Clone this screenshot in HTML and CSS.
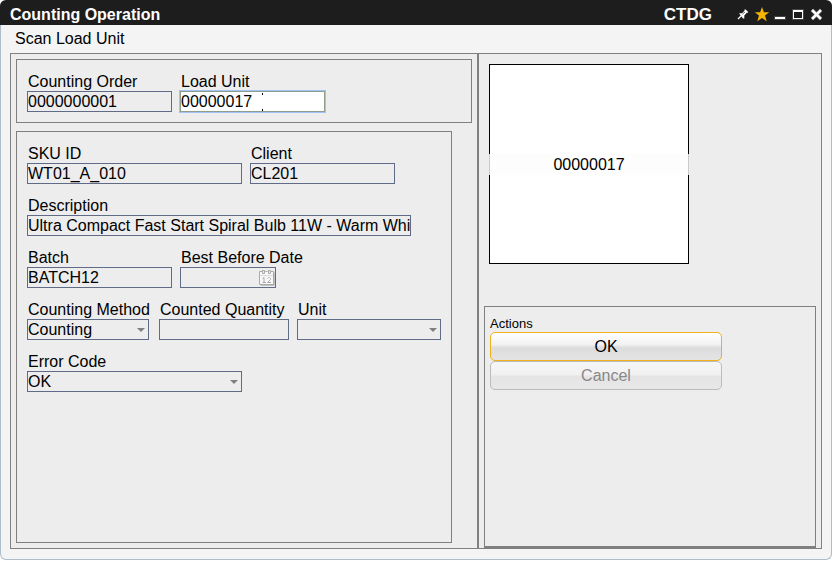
FILE: index.html
```html
<!DOCTYPE html>
<html lang="en">
<head>
<meta charset="utf-8">
<title>Counting Operation</title>
<link rel="stylesheet" href="styles.css">
</head>
<body>
<main class="window">
  <header class="titlebar">
    <h1 class="title">Counting Operation</h1>
    <span class="site">CTDG</span>
    <div class="tools">
      <button class="tool" type="button" aria-label="Pin"><svg width="16" height="16" viewBox="0 0 16 16"><path d="M4 12 7.500 8.500" stroke="#fff" stroke-width="1.300"/><path d="M5 6.200h3l2.500-2.400V2.500h1.200l2.300 2.300v1h-1.200L10.300 8.500v3H9z" fill="#fff"/><path d="M8.500 7 11 5" stroke="#666" stroke-width="1"/></svg></button>
      <button class="tool star" type="button" aria-label="Favorite"><svg width="16" height="16" viewBox="0 0 16 16"><path d="M8 0 9.900 5.300h5.300l-4.200 3.300 1.700 5.600L8 11l-4.700 3.200L5 8.600.8 5.300h5.300z" fill="#f5b400"/></svg></button>
      <button class="tool" type="button" aria-label="Minimize"><svg width="16" height="16" viewBox="0 0 16 16"><path d="M2 9h12v4H2z" fill="#444"/><path d="M3 10h10v2H3z" fill="#fff"/></svg></button>
      <button class="tool" type="button" aria-label="Maximize"><svg width="16" height="16" viewBox="0 0 16 16"><path d="M2 2h12v11H2z" fill="#444"/><path d="M3 3h10v9H3z" fill="#fff"/><path d="M4 5h8v6H4z" fill="#1d1d1d"/></svg></button>
      <button class="tool" type="button" aria-label="Close"><svg width="16" height="16" viewBox="0 0 16 16"><path d="m4 3 9 9m0-9-9 9" stroke="#555" stroke-width="4"/><path d="m4 3 9 9m0-9-9 9" stroke="#fff" stroke-width="2.500"/></svg></button>
    </div>
  </header>
  <h2 class="step">Scan Load Unit</h2>
  <form class="workspace">
    <div class="left">
      <section class="panel">
        <div class="row">
          <div class="field medium"><label for="order">Counting Order</label><input id="order" value="0000000001" readonly></div>
          <div class="field medium"><label for="lu">Load Unit</label><div class="control"><input class="active" id="lu" value="00000017"><svg class="ibeam" width="3" height="19" viewBox="0 0 3 19"><path d="M1 1h1v2H1zM1 17h1v2H1z" fill="#000"/></svg></div></div>
        </div>
      </section>
      <section class="panel details">
        <div class="row">
          <div class="field wide"><label for="sku">SKU ID</label><input id="sku" value="WT01_A_010" readonly></div>
          <div class="field medium"><label for="client">Client</label><input id="client" value="CL201" readonly></div>
        </div>
        <div class="row">
          <div class="field full"><label for="desc">Description</label><input id="desc" value="Ultra Compact Fast Start Spiral Bulb 11W - Warm White" readonly></div>
        </div>
        <div class="row">
          <div class="field medium"><label for="batch">Batch</label><input id="batch" value="BATCH12" readonly></div>
          <div class="field date"><label for="bbd">Best Before Date</label><div class="control"><input id="bbd" readonly>
            <svg class="calendar" width="16" height="17" viewBox="0 0 16 17"><path d="M1.500 3.500h14v13h-14z" fill="#999"/><path d="M.5 2.500h14v13H.5z" fill="#f8f8f8" stroke="#aaa"/><path d="M1 6.500h13" stroke="#ddd"/><path d="M3.500 1.500h2v3h-2zM9.500 1.500h2v3h-2z" fill="#eee" stroke="#aaa"/><path d="M6 2.500h3" stroke="#bbb"/><path d="M3.500 9.500l1.500-1v5M3.500 13.500H7M8.500 9.500l1-1h1l1 1v1l-3 3H12" fill="none" stroke="#aaa"/></svg></div></div>
        </div>
        <div class="row">
          <div class="field method"><label for="method">Counting Method</label><div class="control"><select id="method"><option>Counting</option></select><svg class="arrow" width="8" height="4" viewBox="0 0 8 4"><path d="M0 0h8L4 4z"/></svg></div></div>
          <div class="field quantity"><label for="qty">Counted Quantity</label><input id="qty"></div>
          <div class="field unit"><label for="unit">Unit</label><div class="control"><select id="unit"><option></option></select><svg class="arrow" width="8" height="4" viewBox="0 0 8 4"><path d="M0 0h8L4 4z"/></svg></div></div>
        </div>
        <div class="row">
          <div class="field wide"><label for="error">Error Code</label><div class="control"><select id="error"><option>OK</option></select><svg class="arrow" width="8" height="4" viewBox="0 0 8 4"><path d="M0 0h8L4 4z"/></svg></div></div>
        </div>
      </section>
    </div>
    <div class="right">
      <div class="preview"><span>00000017</span></div>
      <section class="actions">
        <h3>Actions</h3>
        <button class="action primary" type="button">OK</button>
        <button class="action" type="button" disabled>Cancel</button>
      </section>
    </div>
  </form>
</main>
</body>
</html>
```
FILE: styles.css
```css
* { box-sizing: border-box; }

body {
  margin: 0;
  padding: 0 1px 1px 0;
  background: #fff;
  color: #000;
  font-family: "Liberation Sans", Arial, sans-serif;
  font-size: 16px;
}

h1, h2, h3 { margin: 0; font-weight: normal; }

.window {
  display: flex;
  flex-direction: column;
  min-height: calc(100vh - 1px);
  border: 1px solid #afbdc9;
  border-top: 0;
  border-radius: 6px;
  background: #f4f4f4;
}

.titlebar {
  display: flex;
  align-items: center;
  height: 25px;
  margin: 0 -1px;
  padding: 4px 8px 0 10px;
  border-radius: 6px 6px 0 0;
  background: #1d1d1d;
  color: #fff;
  font-weight: bold;
}

.title { flex: 1; font-size: 16px; font-weight: bold; }
.site { margin-right: 22px; font-size: 17px; }
.tools { display: flex; gap: 2px; }

.tool {
  display: flex;
  width: 16px;
  height: 15px;
  padding: 0;
  border: 0;
  background: none;
}

.tool svg { flex: none; }
.star { margin-left: 2px; }

.step { padding: 5px 14px; font-size: 16px; line-height: 18px; }

.workspace {
  display: grid;
  flex: 1;
  grid-template-columns: 26fr 19fr;
  margin: 0 9px 10px;
  border: 1px solid #808080;
  background: #ededed;
}

.left {
  display: flex;
  flex-direction: column;
  gap: 8px;
  padding: 5px;
  border-right: 2px solid #808080;
}

.panel { padding: 13px 10px 10px; border: 1px solid #808080; }

.details {
  display: flex;
  flex: 1;
  flex-direction: column;
  gap: 13px;
  margin-right: 20px;
}

.row { display: flex; gap: 8px; }
.field { display: flex; flex-direction: column; }

label {
  height: 18px;
  padding-left: 1px;
  line-height: 18px;
  white-space: nowrap;
}

.control { position: relative; }

input, select {
  display: block;
  width: 100%;
  height: 21px;
  margin: 0;
  padding: 0;
  border: 1px solid #5f6b87;
  border-radius: 0;
  outline: 0;
  appearance: none;
  background: #ededed;
  color: #000;
  font-family: inherit;
  font-size: 16px;
}

.active {
  border-color: #8f9e8b;
  background: #fff;
  box-shadow: 0 0 0 1px #a0c3f7;
}

.medium { width: 145px; }
.wide { width: 215px; }
.full { width: 384px; }
.date { width: 96px; }
.method { width: 124px; }
.method .control { width: 122px; }
.quantity { width: 130px; }
.unit { width: 144px; }

.arrow {
  position: absolute;
  top: 9px;
  right: 4px;
  fill: #808080;
}

.ibeam { position: absolute; top: 1px; left: 81px; }
.calendar { position: absolute; top: 2px; right: 1px; }

.right { display: flex; flex-direction: column; padding: 0 5px; }

.preview {
  display: flex;
  align-items: center;
  width: 200px;
  height: 200px;
  margin: 10px 5px 42px;
  border: 1px solid #000;
  background: #fff;
}

.preview span {
  flex: 1;
  margin: 0 -1px;
  background: rgba(253, 253, 253, .8);
  line-height: 21px;
  text-align: center;
}

.actions {
  flex: 1;
  padding: 9px 5px;
  border: 1px solid #808080;
  border-bottom-width: 2px;
}

.actions h3 { font-size: 13px; line-height: 16px; }

.action {
  display: block;
  width: 232px;
  height: 29px;
  border: 1px solid #bbb;
  border-radius: 5px;
  background: linear-gradient(#f6f6f6, #f1f1f1 45%, #e4e4e4 55%, #e8e8e8);
  color: #888;
  font-family: inherit;
  font-size: 16px;
}

.primary {
  border-color: #f2b01a;
  background: linear-gradient(#fff, #f2f2f2 42%, #dcdcdc 55%, #e4e4e4);
  color: #000;
}
```
